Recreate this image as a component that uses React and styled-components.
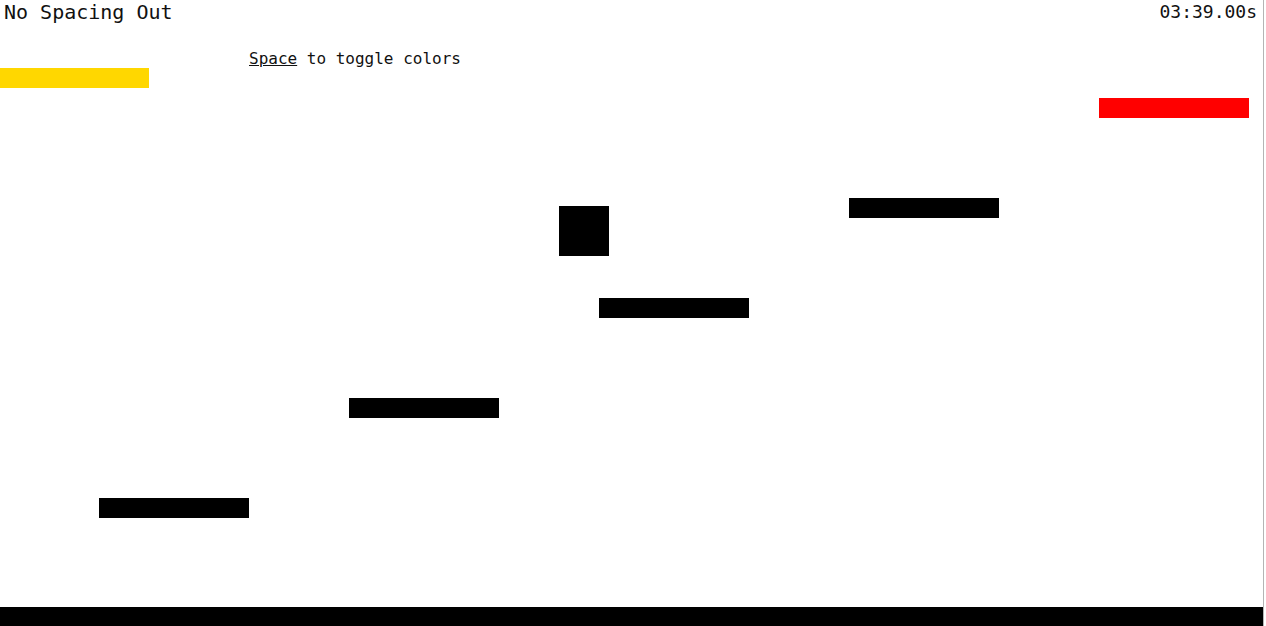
import React from "react";
import styled, { createGlobalStyle } from "styled-components";

const GlobalStyle = createGlobalStyle`
  html, body {
    margin: 0;
    padding: 0;
    background: #fff;
    overflow: hidden;
  }
`;

const Stage = styled.div`
  position: relative;
  width: 1263px;
  height: 626px;
  border-right: 1px solid #b4b4b4;
  font-family: "DejaVu Sans Mono", "Liberation Mono", monospace;
  color: #111;
`;

const Header = styled.div`
  display: flex;
  justify-content: space-between;
  align-items: flex-start;
  padding: 0 6px 0 4px;
`;

const Title = styled.h1`
  margin: 0;
  font-size: 20px;
  font-weight: normal;
  line-height: 24px;
`;

const Timer = styled.div`
  font-size: 18px;
  line-height: 22px;
  padding-top: 1px;
`;

const Hint = styled.p`
  margin: 25px 0 0 249px;
  font-size: 16px;
  line-height: 20px;
`;

const Key = styled.span`
  text-decoration: underline;
`;

const Block = styled.div`
  position: absolute;
  background: ${(p) => p.$color || "#000"};
`;

const Floor = styled.div`
  position: absolute;
  left: 0;
  right: 0;
  top: 607px;
  height: 19px;
  background: #000;
`;

const blocks = [
  { x: 0, y: 68, w: 149, h: 20, color: "#ffd700" },
  { x: 1099, y: 98, w: 150, h: 20, color: "#ff0000" },
  { x: 849, y: 198, w: 150, h: 20 },
  { x: 559, y: 206, w: 50, h: 50 },
  { x: 599, y: 298, w: 150, h: 20 },
  { x: 349, y: 398, w: 150, h: 20 },
  { x: 99, y: 498, w: 150, h: 20 },
];

export default function App() {
  return (
    <>
      <GlobalStyle />
      <Stage>
        <Header>
          <Title>No Spacing Out</Title>
          <Timer>03:39.00s</Timer>
        </Header>
        <Hint>
          <Key>Space</Key> to toggle colors
        </Hint>
        {blocks.map((b, i) => (
          <Block
            key={i}
            $color={b.color}
            style={{ left: b.x, top: b.y, width: b.w, height: b.h }}
          />
        ))}
        <Floor />
      </Stage>
    </>
  );
}
